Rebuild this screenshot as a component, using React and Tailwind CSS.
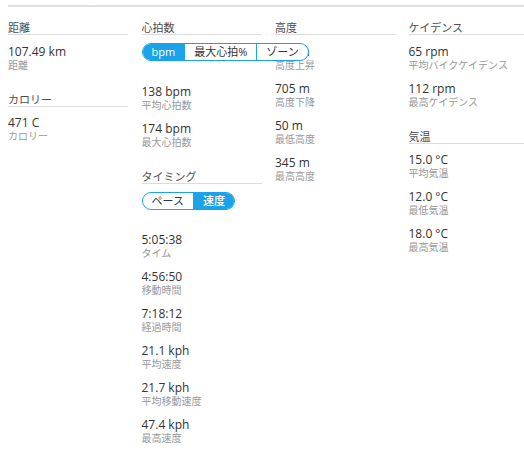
import React from 'react';

const font = { fontFamily: '"Open Sans", "Noto Sans CJK JP", sans-serif' };

const tabs = ['概要', 'ラップ', '区間タイム', 'グラフ', '分析'];

function Header({ children }) {
  return (
    <div className="text-[11px] leading-[13px] text-[#4d4d4d] border-b border-[#dcdcdc] mb-[8px]">
      {children}
    </div>
  );
}

function Stat({ value, label }) {
  return (
    <div className="mb-[8.5px]">
      <div className="text-[12px] leading-[15px] text-[#333] pt-[0.5px]">{value}</div>
      <div className="text-[10px] leading-[13px] text-[#999]">{label}</div>
    </div>
  );
}

function Section({ title, toggle, items }) {
  return (
    <div className="mb-[21px]">
      <Header>{title}</Header>
      {toggle}
      {items.map((it) => (
        <Stat key={it.label} value={it.value} label={it.label} />
      ))}
    </div>
  );
}

function Toggle({ options, active }) {
  return (
    <div className="relative z-10 mt-[4px] mb-[22px] flex w-max h-[18px] rounded-full border border-[#1aa3e8] bg-white overflow-hidden">
      {options.map((o, i) => (
        <div
          key={o}
          className={
            'px-[9px] text-[11px] leading-[16px] whitespace-nowrap ' +
            (i > 0 ? 'border-l border-[#1aa3e8] ' : '') +
            (o === active ? 'bg-[#1aa3e8] text-white font-medium' : 'text-[#333]')
          }
        >
          {o}
        </div>
      ))}
    </div>
  );
}

export default function App() {
  return (
    <div className="w-[524px] h-[454px] overflow-hidden bg-white" style={font}>
      <div className="ml-2 h-[7px] flex items-end border-b-2 border-[#e0e0e0] overflow-hidden">
        {tabs.map((t, i) => (
          <div
            key={t}
            className={
              'px-[6px] h-[16px] -mb-[2px] border-b-2 ' +
              (i === 0 ? 'w-[34px] border-[#1aa3e8]' : 'border-transparent')
            }
          >
            <div className="relative -top-[3px] text-[10px] leading-[14px] text-[#c8c8c8] whitespace-nowrap">{t}</div>
          </div>
        ))}
      </div>

      <div className="grid grid-cols-[120px_120px_120px_120px] gap-x-[13.5px] pl-2 pt-[14px]">
        <div>
          <Section title="距離" items={[{ value: '107.49 km', label: '距離' }]} />
          <Section title="カロリー" items={[{ value: '471 C', label: 'カロリー' }]} />
        </div>

        <div>
          <Section
            title="心拍数"
            toggle={<Toggle options={['bpm', '最大心拍%', 'ゾーン']} active="bpm" />}
            items={[
              { value: '138 bpm', label: '平均心拍数' },
              { value: '174 bpm', label: '最大心拍数' },
            ]}
          />
          <Section
            title="タイミング"
            toggle={<Toggle options={['ペース', '速度']} active="速度" />}
            items={[
              { value: '5:05:38', label: 'タイム' },
              { value: '4:56:50', label: '移動時間' },
              { value: '7:18:12', label: '経過時間' },
              { value: '21.1 kph', label: '平均速度' },
              { value: '21.7 kph', label: '平均移動速度' },
              { value: '47.4 kph', label: '最高速度' },
            ]}
          />
        </div>

        <div>
          <Section
            title="高度"
            items={[
              { value: '705 m', label: '高度上昇' },
              { value: '705 m', label: '高度下降' },
              { value: '50 m', label: '最低高度' },
              { value: '345 m', label: '最高高度' },
            ]}
          />
        </div>

        <div>
          <Section
            title="ケイデンス"
            items={[
              { value: '65 rpm', label: '平均バイクケイデンス' },
              { value: '112 rpm', label: '最高ケイデンス' },
            ]}
          />
          <Section
            title="気温"
            items={[
              { value: '15.0 °C', label: '平均気温' },
              { value: '12.0 °C', label: '最低気温' },
              { value: '18.0 °C', label: '最高気温' },
            ]}
          />
        </div>
      </div>
    </div>
  );
}
